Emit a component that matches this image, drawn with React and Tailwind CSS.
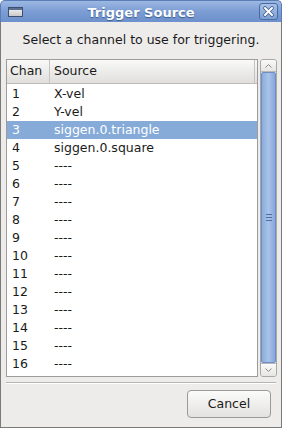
import React from 'react';

const rows = [
  ['1', 'X-vel'],
  ['2', 'Y-vel'],
  ['3', 'siggen.0.triangle'],
  ['4', 'siggen.0.square'],
  ['5', '----'],
  ['6', '----'],
  ['7', '----'],
  ['8', '----'],
  ['9', '----'],
  ['10', '----'],
  ['11', '----'],
  ['12', '----'],
  ['13', '----'],
  ['14', '----'],
  ['15', '----'],
  ['16', '----'],
];

const TitleBar = () => (
  <div className="h-[22px] shrink-0 flex items-center rounded-t-[5px] border border-b-0 border-[#5a7db8] bg-gradient-to-b from-[#9cb8e2] via-[#7c9dd4] to-[#6d91cc] relative">
    {/* window menu icon */}
    <div className="ml-[7px] w-[15px] h-[10px] border border-[#3c4f6e] bg-gradient-to-b from-[#f4f4f4] to-[#c9c9c9] shadow-[inset_0_2px_0_#5b6f91]" />
    <div className="flex-1 text-center text-white font-bold text-[13px] leading-none pt-px [text-shadow:0_1px_1px_#3c5a8c]">
      Trigger Source
    </div>
    {/* close */}
    <div className="mr-[3px] w-[19px] h-[17px] rounded-[3px] border border-[#4a6aa3] bg-gradient-to-b from-[#a7c0e6] to-[#7f9fd3] flex items-center justify-center">
      <svg width="11" height="11" viewBox="0 0 11 11">
        <path d="M2 2 L9 9 M9 2 L2 9" stroke="#44608f" strokeWidth="3.6" strokeLinecap="round" />
        <path d="M2 2 L9 9 M9 2 L2 9" stroke="#ffffff" strokeWidth="2" strokeLinecap="round" />
      </svg>
    </div>
  </div>
);

const Scrollbar = () => (
  <div className="w-[17px] shrink-0 flex flex-col rounded-[3px] border border-[#a8a8a8] bg-[#e4e3e1] overflow-hidden">
    <div className="h-[12px] shrink-0 flex items-center justify-center bg-gradient-to-b from-[#fafafa] to-[#e6e5e3] border-b border-[#b8b8b8]">
      <svg width="7" height="4" viewBox="0 0 7 4">
        <path d="M0.5 3.5 L3.5 0.5 L6.5 3.5" stroke="#8a8a8a" fill="none" />
      </svg>
    </div>
    <div className="flex-1 border border-[#6d8fc6] rounded-[2px] bg-gradient-to-r from-[#8cabdc] via-[#a9c4ea] to-[#86a6d9] flex items-center justify-center">
      <div className="flex flex-col gap-[2px]">
        <div className="w-[6px] h-px bg-[#4e6d9f]" />
        <div className="w-[6px] h-px bg-[#4e6d9f]" />
        <div className="w-[6px] h-px bg-[#4e6d9f]" />
      </div>
    </div>
    <div className="h-[13px] shrink-0 flex items-center justify-center bg-gradient-to-b from-[#fafafa] to-[#e6e5e3] border-t border-[#b8b8b8]">
      <svg width="7" height="4" viewBox="0 0 7 4">
        <path d="M0.5 0.5 L3.5 3.5 L6.5 0.5" stroke="#8a8a8a" fill="none" />
      </svg>
    </div>
  </div>
);

export default function App() {
  return (
    <div className="w-[282px] h-[428px] flex flex-col bg-white font-['DejaVu_Sans',sans-serif] text-[12.5px] text-[#1a1a1a]">
      <TitleBar />
      <div className="flex-1 flex flex-col bg-[#edeceb] border-x border-b border-[#7a7a7a]">
        <div className="h-[37px] shrink-0 flex items-center justify-center pb-px">
          Select a channel to use for triggering.
        </div>

        <div className="h-[318px] shrink-0 flex gap-[2px] pl-[5px] pr-[4px]">
          <div className="flex-1 border border-[#9d9c9b] bg-white flex flex-col overflow-hidden">
            <div className="h-[24px] shrink-0 flex items-center bg-gradient-to-b from-[#f9f9f8] to-[#e0dfdd] border-b border-[#bdbcbb]">
              <div className="w-[43px] h-full flex items-center pl-[3px] border-r border-[#c4c3c1]">Chan</div>
              <div className="flex-1 h-full flex items-center pl-[4px] border-r border-[#c4c3c1] mr-[2px]">Source</div>
            </div>
            <div className="pt-px flex flex-col">
              {rows.map(([ch, src]) => {
                const sel = ch === '3';
                return (
                  <div
                    key={ch}
                    className={`h-[18px] flex items-center ${sel ? 'bg-[#86abd9] text-white' : ''}`}
                  >
                    <div className="w-[43px] pl-[5px]">{ch}</div>
                    <div className="flex-1 pl-[4px]">{src}</div>
                  </div>
                );
              })}
            </div>
          </div>
          <Scrollbar />
        </div>

        <div className="mx-[5px] mt-[5px] h-[2px] shrink-0 border-t border-[#b5b4b2] border-b border-b-white" />

        <div className="flex-1 flex items-start justify-end pt-[6px] pr-[10px]">
          <button className="w-[84px] h-[28px] rounded-[4px] border border-[#9a9998] bg-gradient-to-b from-[#fbfbfa] to-[#e3e2e0] text-[12.5px] text-[#1a1a1a] font-['DejaVu_Sans',sans-serif]">
            Cancel
          </button>
        </div>
      </div>
    </div>
  );
}
